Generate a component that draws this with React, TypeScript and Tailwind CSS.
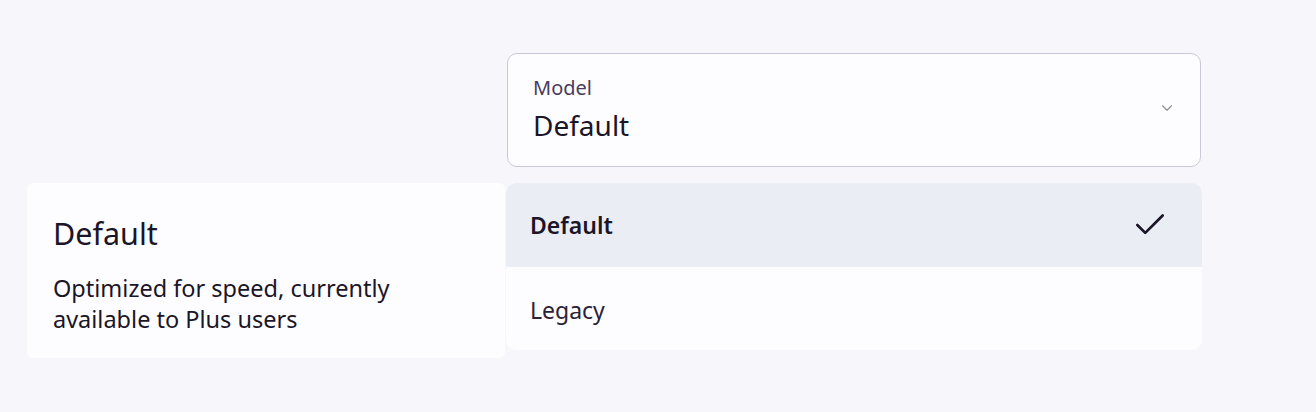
import { Check, ChevronDown } from "lucide-react";

const font = { fontFamily: '"Noto Sans", "Open Sans", sans-serif' };

export default function App() {
  return (
    <div
      className="w-[1316px] h-[412px] bg-[#f7f7fb] overflow-hidden text-[#1b1528]"
      style={font}
    >
      <div className="pt-[53px] pl-[507px]">
        <div className="w-[694px] h-[114px] rounded-[10px] border border-[#c9c9d8] bg-[#fdfdff] flex items-center justify-between pl-[25px] pr-[24px]">
          <div className="flex flex-col">
            <span className="text-[20px] leading-[26px] text-[#4a3b5c] -mt-[2px]">Model</span>
            <span className="text-[28px] leading-[38px] mt-[5px]">Default</span>
          </div>
          <ChevronDown className="w-[18px] h-[18px] text-[#8a8a96] mb-[4px]" strokeWidth={1.5} />
        </div>
      </div>

      <div className="flex items-start mt-[16px] pl-[27px]">
        <div className="w-[478px] h-[175px] bg-[#fdfdff] rounded-[6px] pl-[26px] pt-[30px]">
          <div className="text-[30.5px] leading-[40px]">Default</div>
          <div className="text-[23.5px] leading-[31px] mt-[20px]">
            Optimized for speed, currently
            <br />
            available to Plus users
          </div>
        </div>
        <div className="w-[696px] h-[167px] ml-[1px] rounded-[10px] overflow-hidden bg-[#fdfdff] flex flex-col">
          <div className="h-[84px] bg-[#ebedf5] flex items-center justify-between pl-[24px] pr-[33px]">
            <span className="text-[23px] font-semibold">Default</span>
            <Check className="w-[38px] h-[38px] text-[#1b1528]" strokeWidth={1.7} />
          </div>
          <div className="h-[83px] flex items-center pl-[24px]">
            <span className="text-[23px] text-[#2b2238] mt-[4px]">Legacy</span>
          </div>
        </div>
      </div>
    </div>
  );
}
